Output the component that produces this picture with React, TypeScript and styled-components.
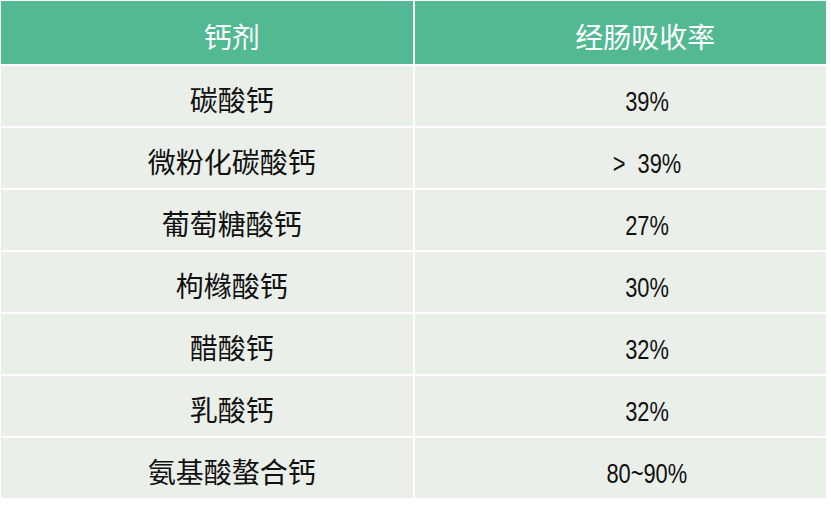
import React from 'react'
import styled, { createGlobalStyle } from 'styled-components'

const GlobalStyle = createGlobalStyle`
  html, body {
    margin: 0;
    padding: 0;
    background: #ffffff;
  }
  body {
    font-family: "Noto Sans CJK SC", "Noto Sans", sans-serif;
  }
`

const Table = styled.table`
  width: 829px;
  margin: -1px 0 0 -1px;
  border-collapse: separate;
  border-spacing: 2px;
  table-layout: fixed;
`

const HeadCell = styled.th`
  height: 63px;
  padding: 6px 0 0 50px;
  box-sizing: border-box;
  background: #52b993;
  color: #ffffff;
  font-size: 28px;
  font-weight: 400;
  text-align: center;
  vertical-align: middle;
`

const Cell = styled.td`
  height: 60px;
  padding: 6px 0 0 50px;
  box-sizing: border-box;
  background: #eaefe9;
  color: #111111;
  font-size: 28px;
  text-align: center;
  vertical-align: middle;
`

const Rate = styled.span`
  display: inline-block;
  margin-left: 4px;
  font-family: "Liberation Sans", "Noto Sans CJK SC", sans-serif;
  font-size: 28px;
  white-space: pre;
  transform: scaleX(0.78);
`

const rows: [string, string][] = [
  ['碳酸钙', '39%'],
  ['微粉化碳酸钙', '>  39%'],
  ['葡萄糖酸钙', '27%'],
  ['枸橼酸钙', '30%'],
  ['醋酸钙', '32%'],
  ['乳酸钙', '32%'],
  ['氨基酸螯合钙', '80~90%'],
]

export default function App() {
  return (
    <>
      <GlobalStyle />
      <Table>
        <thead>
          <tr>
            <HeadCell>钙剂</HeadCell>
            <HeadCell>经肠吸收率</HeadCell>
          </tr>
        </thead>
        <tbody>
          {rows.map(([name, rate]) => (
            <tr key={name}>
              <Cell>{name}</Cell>
              <Cell><Rate>{rate}</Rate></Cell>
            </tr>
          ))}
        </tbody>
      </Table>
    </>
  )
}
